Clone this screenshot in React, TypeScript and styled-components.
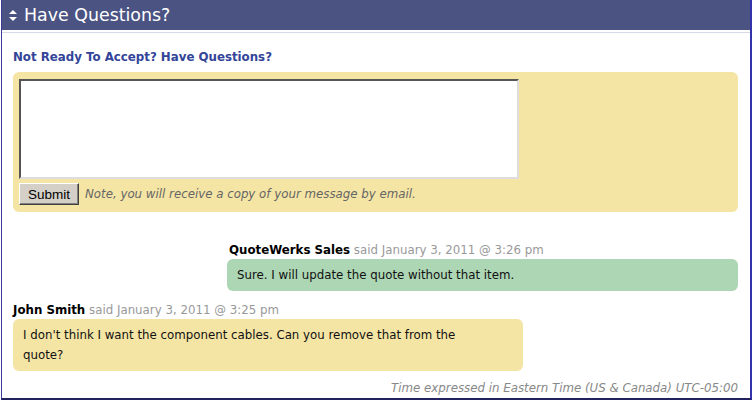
import React from 'react';
import styled, { createGlobalStyle } from 'styled-components';

const Global = createGlobalStyle`
  html, body {
    margin: 0;
    padding: 0;
    background: #fff;
  }
  body {
    font-family: "DejaVu Sans", Verdana, sans-serif;
    font-size: 11.8px;
  }
`;

const Frame = styled.div`
  box-sizing: border-box;
  width: 751px;
  height: 400px;
  margin-left: 1px;
  border-left: 1px solid #3b3b9a;
  border-right: 2px solid #3333aa;
  border-bottom: 2px solid #22225e;
  display: flex;
  flex-direction: column;
`;

const Header = styled.div`
  height: 30px;
  background: #4b5382;
  display: flex;
  align-items: center;
  gap: 7px;
  padding-left: 7px;
  color: #fff;
  font-size: 17.4px;
  box-shadow: 0 2px 0 #fff, 0 3px 0 #d6d9e8;
`;

const Body = styled.div`
  flex: 1;
  display: flex;
  flex-direction: column;
  padding: 19px 12px 0 11px;
`;

const Title = styled.div`
  color: #334499;
  font-weight: bold;
  line-height: 16px;
  margin-bottom: 7px;
`;

const FormBox = styled.div`
  background: #f5e5a5;
  border-radius: 6px;
  padding: 7px 6px;
  display: flex;
  flex-direction: column;
  gap: 4px;
`;

const TextArea = styled.textarea`
  box-sizing: border-box;
  width: 500px;
  height: 100px;
  margin: 0;
  resize: none;
  background: #fff;
  border: 2px solid;
  border-color: #555 #ddd #ddd #555;
  outline: none;
`;

const Row = styled.div`
  display: flex;
  align-items: center;
  gap: 6px;
`;

const Button = styled.button`
  box-sizing: border-box;
  width: 60px;
  height: 22px;
  background: #d4d0c8;
  border: 1px solid;
  border-color: #fff #404040 #404040 #fff;
  box-shadow: inset -1px -1px 0 #808080;
  font-family: "Liberation Sans", Arial, sans-serif;
  font-size: 13.5px;
  color: #000;
  padding: 0;
`;

const Note = styled.span`
  color: #666;
  font-style: italic;
`;

const Messages = styled.div`
  display: flex;
  flex-direction: column;
  gap: 11px;
  margin-top: 30px;
`;

const Message = styled.div<{ $mine?: boolean }>`
  display: flex;
  flex-direction: column;
  align-self: ${p => (p.$mine ? 'flex-end' : 'flex-start')};
  width: ${p => (p.$mine ? '511px' : '510px')};
`;

const Meta = styled.div<{ $mine?: boolean }>`
  line-height: 16px;
  color: #999;
  padding-left: ${p => (p.$mine ? '2px' : '0')};
  margin-bottom: 1px;
`;

const Name = styled.span`
  color: #000;
  font-weight: bold;
`;

const Bubble = styled.div<{ $tone: 'green' | 'yellow' }>`
  background: ${p => (p.$tone === 'green' ? '#add6b4' : '#f5e5a5')};
  border-radius: 6px;
  padding: 6px 40px 6px 10px;
  line-height: 20px;
  color: #111;
`;

const Footer = styled.div`
  margin-top: auto;
  padding-bottom: 3px;
  text-align: right;
  font-style: italic;
  color: #888;
`;

const SortIcon = () => (
  <svg width="8" height="11" viewBox="0 0 8 11">
    <path d="M4 0 L8 4 L0 4 Z" fill="#fff" />
    <path d="M0 7 L8 7 L4 11 Z" fill="#fff" />
  </svg>
);

export default function App() {
  return (
    <>
      <Global />
      <Frame>
        <Header>
          <SortIcon />
          <span>Have Questions?</span>
        </Header>
        <Body>
          <Title>Not Ready To Accept? Have Questions?</Title>
          <FormBox>
            <TextArea />
            <Row>
              <Button>Submit</Button>
              <Note>Note, you will receive a copy of your message by email.</Note>
            </Row>
          </FormBox>
          <Messages>
            <Message $mine>
              <Meta $mine>
                <Name>QuoteWerks Sales</Name> said January 3, 2011 @ 3:26 pm
              </Meta>
              <Bubble $tone="green">Sure. I will update the quote without that item.</Bubble>
            </Message>
            <Message>
              <Meta>
                <Name>John Smith</Name> said January 3, 2011 @ 3:25 pm
              </Meta>
              <Bubble $tone="yellow">
                I don't think I want the component cables. Can you remove that from the quote?
              </Bubble>
            </Message>
          </Messages>
          <Footer>Time expressed in Eastern Time (US &amp; Canada) UTC-05:00</Footer>
        </Body>
      </Frame>
    </>
  );
}
